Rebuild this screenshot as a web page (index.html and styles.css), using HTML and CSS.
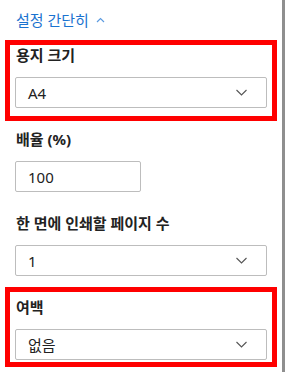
FILE: index.html
```html
<!DOCTYPE html>
<html lang="ko">
<head>
<meta charset="utf-8">
<link rel="stylesheet" href="styles.css">
</head>
<body>
<div class="panel">
  <div class="content">
    <a class="toggle" href="#">설정 간단히 <svg class="up" width="9" height="6" viewBox="0 0 9 6"><polyline points="1,5 4.5,1.5 8,5" fill="none" stroke="#5c9be0" stroke-width="1.2"/></svg></a>

    <div class="section hl hl-1">
      <div class="label">용지 크기</div>
      <div class="select"><span>A4</span><svg class="chev" width="11" height="7" viewBox="0 0 11 7"><polyline points="0.5,1 5.5,6 10.5,1" fill="none" stroke="#555" stroke-width="1.1"/></svg></div>
    </div>

    <div class="section">
      <div class="label">배율 (%)</div>
      <div class="input"><span>100</span></div>
    </div>

    <div class="section">
      <div class="label">한 면에 인쇄할 페이지 수</div>
      <div class="select"><span>1</span><svg class="chev" width="11" height="7" viewBox="0 0 11 7"><polyline points="0.5,1 5.5,6 10.5,1" fill="none" stroke="#555" stroke-width="1.1"/></svg></div>
    </div>

    <div class="section hl hl-2">
      <div class="label">여백</div>
      <div class="select"><span>없음</span><svg class="chev" width="11" height="7" viewBox="0 0 11 7"><polyline points="0.5,1 5.5,6 10.5,1" fill="none" stroke="#555" stroke-width="1.1"/></svg></div>
    </div>
  </div>
  <div class="scrollbar"></div>
</div>
</body>
</html>
```
FILE: styles.css
```css
* { box-sizing: border-box; }
html, body { margin: 0; padding: 0; background: #fff; }
body {
  font-family: "Noto Sans", "Noto Sans CJK KR", sans-serif;
  font-size: 15px;
  color: #1f1f1f;
}
.panel {
  display: flex;
  height: 372px;
  overflow: hidden;
}
.content {
  flex: 1;
  padding: 10px 15px 0 15px;
  display: flex;
  flex-direction: column;
  gap: 21px;
}
.scrollbar {
  width: 3px;
  background: #8f8f8f;
}
.toggle {
  display: flex;
  align-items: center;
  gap: 4px;
  height: 20px;
  line-height: 20px;
  padding-left: 1px;
  color: #1a73d0;
  text-decoration: none;
  font-size: 15px;
  margin-bottom: -6px;
}
.toggle .up { margin-left: 3px; }
.section {
  position: relative;
  display: flex;
  flex-direction: column;
}
.label {
  height: 20px;
  line-height: 20px;
  font-weight: 700;
  font-size: 15px;
  padding-left: 1px;
  margin-bottom: 12px;
  color: #222;
}
.select, .input {
  height: 31px;
  border: 1px solid #bdbdbd;
  border-radius: 2px;
  display: flex;
  align-items: center;
  padding: 0 19px 0 12px;
  font-size: 15px;
  color: #222;
  background: #fff;
}
.select { justify-content: space-between; }
.input { width: 126px; }
.hl::after {
  content: "";
  position: absolute;
  left: -10px;
  right: -10px;
  border: 5px solid #ff0000;
  pointer-events: none;
}
.hl-1::after { top: -5px; bottom: -13px; }
.hl-2::after { top: -10px; bottom: -7px; }
```
